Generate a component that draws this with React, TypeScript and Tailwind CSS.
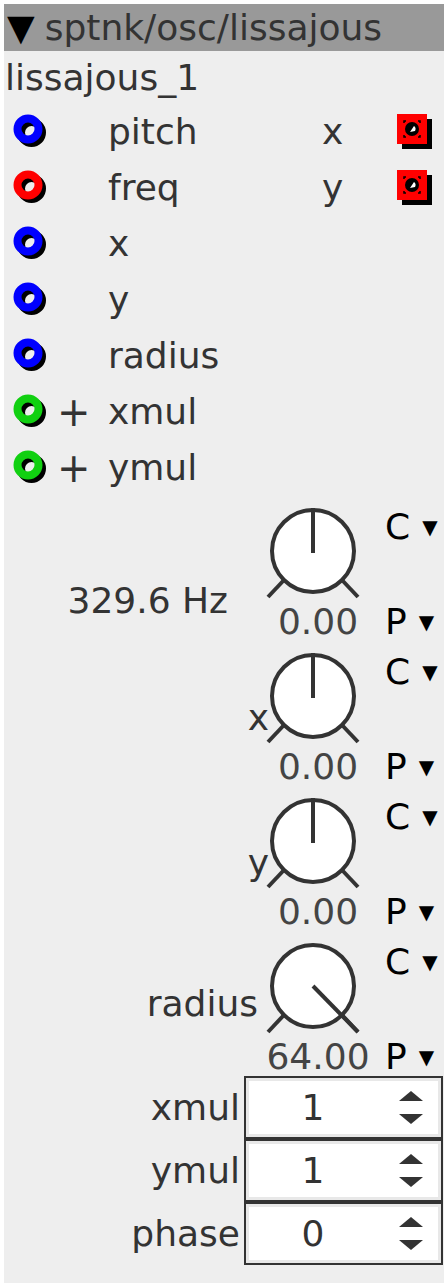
import React from 'react'

function Port({ color, plus }: { color: string; plus?: boolean }) {
  return (
    <div className="flex items-center">
      <svg width="36" height="36" viewBox="0 0 36 36">
        <circle cx="18.5" cy="18.5" r="10.5" fill="none" stroke="#000" strokeWidth="8" />
        <circle cx="15" cy="15" r="10.5" fill="none" stroke={color} strokeWidth="8" />
      </svg>
      <span className="w-[50px] pl-[8px] text-[40px] leading-none">{plus ? '+' : ''}</span>
    </div>
  )
}

function OutPort() {
  return (
    <svg width="36" height="36" viewBox="0 0 36 36">
      <rect x="5" y="5" width="30" height="30" fill="#000" />
      <rect x="0" y="0" width="30" height="30" fill="#f00" />
      <circle cx="15" cy="15" r="7" fill="#000" />
      <path d="M17 12 a4 4 0 0 1 1 5 l-5 1 z" fill="#fff" />
      <path d="M7 9 V7 H9 M21 7 H23 V9 M23 21 V23 H21 M9 23 H7 V21" stroke="#000" strokeWidth="1.5" fill="none" />
    </svg>
  )
}

function PortRow({ color, plus, label, out }: { color: string; plus?: boolean; label: string; out?: string }) {
  return (
    <div className="flex h-[56px] items-center">
      <div className="w-[104px] pl-[9px]">
        <Port color={color} plus={plus} />
      </div>
      <span className="w-[214px]">{label}</span>
      {out && (
        <>
          <span className="w-[75px]">{out}</span>
          <OutPort />
        </>
      )}
    </div>
  )
}

function Knob({ max }: { max?: boolean }) {
  return (
    <svg width="100" height="98" viewBox="0 0 100 98">
      <circle cx="50" cy="48" r="41" fill="#fff" stroke="#333" strokeWidth="4" />
      <line x1="21" y1="77" x2="5" y2="94" stroke="#333" strokeWidth="4" />
      <line x1="79" y1="77" x2="95" y2="94" stroke="#333" strokeWidth="4" />
      {max ? (
        <line x1="50" y1="48" x2="95" y2="94" stroke="#333" strokeWidth="4" />
      ) : (
        <line x1="50" y1="5" x2="50" y2="50" stroke="#333" strokeWidth="4" />
      )}
    </svg>
  )
}

function Mode({ letter }: { letter: string }) {
  return (
    <div className="flex items-center pl-[22px] text-black">
      <span>{letter}</span>
      <span className="ml-[12px] text-[20px]">▼</span>
    </div>
  )
}

function KnobBlock({ label, value, max, side }: { label: string; value: string; max?: boolean; side?: string }) {
  return (
    <div className="grid h-[145px] grid-cols-[259px_100px_1fr] grid-rows-[98px_47px]">
      {side ? (
        <div className="row-span-2 pr-[35px] pt-[71px] text-right">{side}</div>
      ) : (
        <div
          className={`flex items-end justify-end ${label.length === 1 ? 'mr-[-6px] pb-[1px]' : 'pb-[5px] pr-[5px]'}`}
        >
          {label}
        </div>
      )}
      <Knob max={max} />
      <div className="mt-[-3px]">
        <Mode letter="C" />
      </div>
      {!side && <div />}
      <div className="flex items-center justify-center whitespace-nowrap pb-[6px] pl-[10px] text-[#444]">{value}</div>
      <div className="flex items-center pb-[6px]">
        <Mode letter="P" />
      </div>
    </div>
  )
}

function SpinBox({ label, value }: { label: string; value: string }) {
  return (
    <div className="flex h-[63px]">
      <div className="flex w-[240px] items-center justify-end pr-[4px]">{label}</div>
      <div className="flex w-[199px] border-2 border-[#333] bg-white">
        <div className="flex flex-1 items-center border-[3px] border-[#e8e8e8]">
          <span className="w-[128px] text-center">{value}</span>
          <div className="ml-auto mr-[15px] flex flex-col gap-[13px]">
            <svg width="24" height="10" viewBox="0 0 24 10">
              <path d="M0 10 L12 0 L24 10 Z" fill="#333" />
            </svg>
            <svg width="24" height="10" viewBox="0 0 24 10">
              <path d="M0 0 L24 0 L12 10 Z" fill="#333" />
            </svg>
          </div>
        </div>
      </div>
    </div>
  )
}

export default function App() {
  return (
    <div className="min-h-screen bg-white p-1 font-['DejaVu_Sans',sans-serif] text-[36px] text-[#333]">
      <div className="h-[1279px] w-[440px] bg-[#eeeeee]">
        <div className="flex h-[47px] items-center bg-[#999999] pl-[3px]">
          <span className="text-black">▼</span>
          <span className="ml-[10px]">sptnk/osc/lissajous</span>
        </div>
        <div className="flex h-[53px] items-center pl-[1px]">lissajous_1</div>
        <PortRow color="#0000ff" label="pitch" out="x" />
        <PortRow color="#ff0000" label="freq" out="y" />
        <PortRow color="#0000ff" label="x" />
        <PortRow color="#0000ff" label="y" />
        <PortRow color="#0000ff" label="radius" />
        <PortRow color="#11d011" plus label="xmul" />
        <PortRow color="#11d011" plus label="ymul" />
        <div className="h-[7px]" />
        <KnobBlock label="" side="329.6 Hz" value="0.00" />
        <KnobBlock label="x" value="0.00" />
        <KnobBlock label="y" value="0.00" />
        <KnobBlock label="radius" value="64.00" max />
        <div className="mt-[-7px]">
          <SpinBox label="xmul" value="1" />
          <SpinBox label="ymul" value="1" />
          <SpinBox label="phase" value="0" />
        </div>
      </div>
    </div>
  )
}
